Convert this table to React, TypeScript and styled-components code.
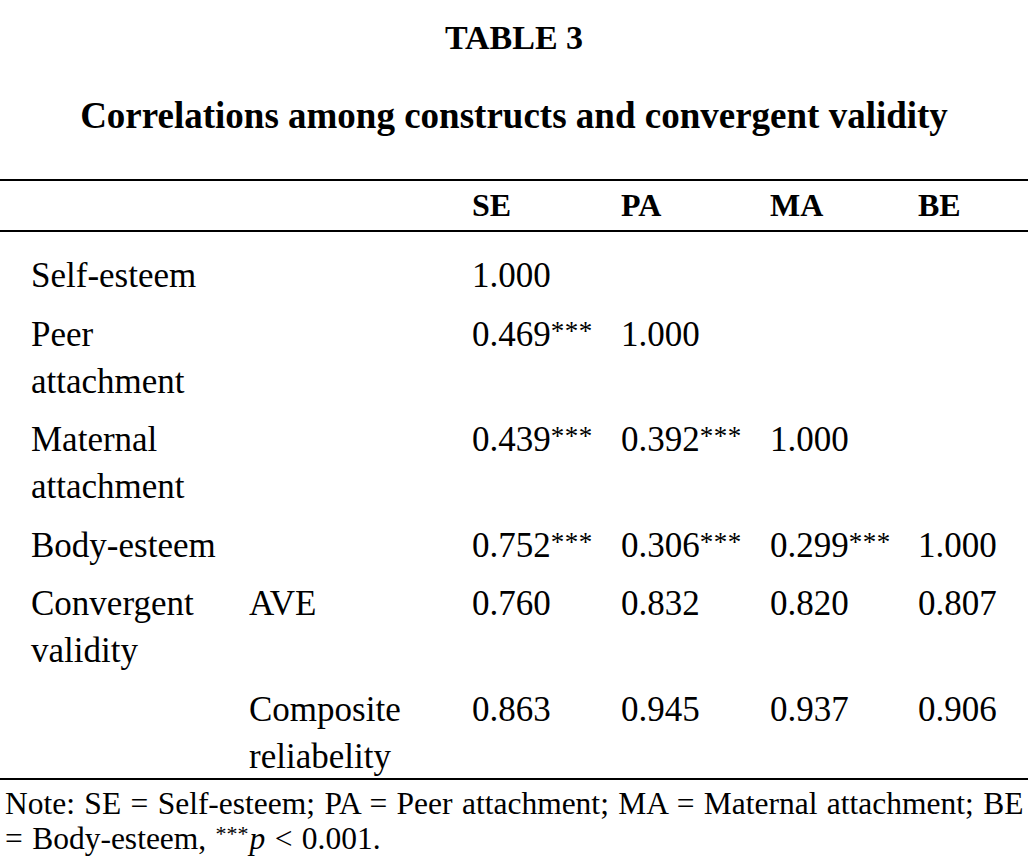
import React from 'react';
import styled, { createGlobalStyle } from 'styled-components';

const GlobalStyle = createGlobalStyle`
	html, body {
		margin: 0;
		padding: 0;
		background: #fff;
	}
	body {
		font-family: "Liberation Serif", "Times New Roman", serif;
		color: #000;
	}
`

type Row = {
	label: string;
	sub?: string;
	values: string[];
}

const heads = ['SE', 'PA', 'MA', 'BE'];

const rows: Row[] = [
	{ label: 'Self-esteem', values: ['1.000'] },
	{ label: 'Peer attachment', values: ['0.469***', '1.000'] },
	{ label: 'Maternal attachment', values: ['0.439***', '0.392***', '1.000'] },
	{ label: 'Body-esteem', values: ['0.752***', '0.306***', '0.299***', '1.000'] },
	{ label: 'Convergent validity', sub: 'AVE', values: ['0.760', '0.832', '0.820', '0.807'] },
	{ label: '', sub: 'Composite reliabelity', values: ['0.863', '0.945', '0.937', '0.906'] },
];

const Value = ({ text }: { text: string }) => {
	const m = text.match(/^([^*]*)(\**)$/);
	const num = m ? m[1] : text;
	const stars = m ? m[2] : '';
	return (
		<NumCell>
			{num}
			{stars && <Stars>{stars}</Stars>}
		</NumCell>
	);
};

export default function App() {
	return (
		<Page>
			<GlobalStyle />
			<TableNo>TABLE 3</TableNo>
			<Caption>Correlations among constructs and convergent validity</Caption>
			<Table>
				<HeadRow>
					<Cell />
					<Cell />
					{heads.map(h => <HeadCell key={h}>{h}</HeadCell>)}
				</HeadRow>
				<Body>
					{rows.map((r, i) => (
						<BodyRow key={i}>
							<Cell>{r.label}</Cell>
							<Cell>{r.sub}</Cell>
							{heads.map((h, j) => (
								r.values[j] ? <Value key={h} text={r.values[j]} /> : <Cell key={h} />
							))}
						</BodyRow>
					))}
				</Body>
			</Table>
			<Note>
				Note: SE = Self-esteem; PA = Peer attachment; MA = Maternal attachment; BE = Body-esteem, <NoteStars>***</NoteStars><Italic>p</Italic> &lt; 0.001.
			</Note>
		</Page>
	);
}

const Page = styled.div`
	width: 1028px;
	min-height: 863px;
	background: #fff;
	overflow: hidden;
`

const TableNo = styled.h1`
	margin: 0;
	padding-top: 22px;
	font-size: 34px;
	line-height: 32px;
	font-weight: 700;
	text-align: center;
`

const Caption = styled.h2`
	margin: 42px 0 0;
	font-size: 37px;
	line-height: 40px;
	font-weight: 700;
	text-align: center;
`

const Table = styled.div`
	margin-top: 43px;
	border-top: 2px solid #000;
	border-bottom: 2px solid #000;
`

const Grid = styled.div`
	display: grid;
	grid-template-columns: 218px 223px 149px 149px 148px 1fr;
	padding-left: 31px;
`

const HeadRow = styled(Grid)`
	padding-top: 1px;
	padding-bottom: 1px;
	border-bottom: 2px solid #000;
	font-size: 32px;
	line-height: 47px;
	font-weight: 700;
`

const Body = styled.div`
	padding: 8.5px 0 0;
`

const BodyRow = styled(Grid)`
	padding-top: 11.5px;
	font-size: 35px;
	line-height: 47px;

	&:last-child {
		margin-bottom: -2px;
	}
`

const Cell = styled.div`
	padding-right: 12px;
`

const HeadCell = styled(Cell)``

const NumCell = styled(Cell)`
	white-space: nowrap;
`

const Stars = styled.span`
	font-size: 27px;
	letter-spacing: 0.5px;
	vertical-align: 6px;
	line-height: 0;
`

const Note = styled.p`
	margin: 0;
	padding: 6px 0 0 5px;
	font-size: 31.5px;
	line-height: 35px;
	word-spacing: 1.5px;
`

const NoteStars = styled.span`
	font-size: 22px;
	vertical-align: 8px;
	line-height: 0;
	margin-right: 1px;
`

const Italic = styled.i`
	font-style: italic;
`
